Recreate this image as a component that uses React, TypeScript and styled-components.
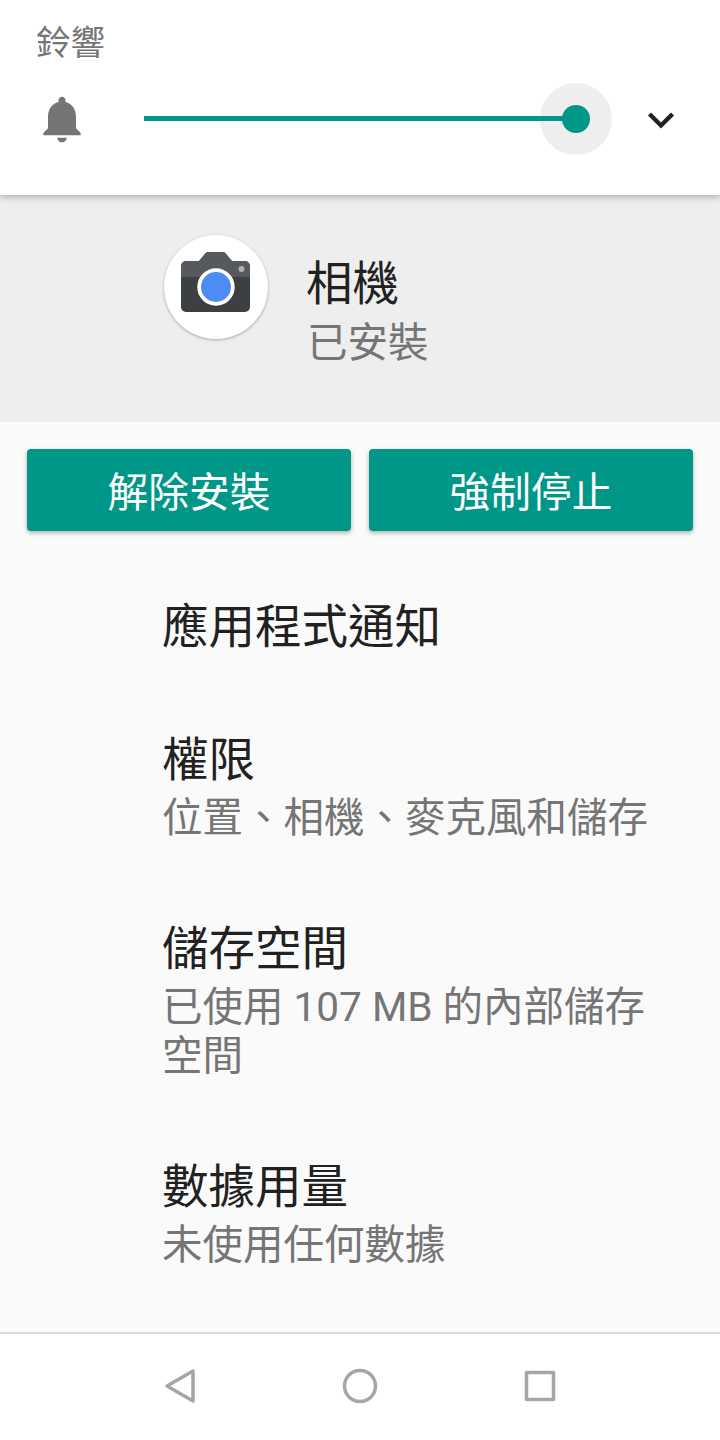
import styled, { createGlobalStyle } from 'styled-components';

const GlobalStyle = createGlobalStyle`
  html, body {
    margin: 0;
    padding: 0;
    background: #fafafa;
    font-family: Roboto, 'Noto Sans CJK TC', sans-serif;
  }
`;

const Screen = styled.div`
  width: 720px;
  height: 1440px;
  display: flex;
  flex-direction: column;
  overflow: hidden;
  background: #fafafa;
`;

// --- Volume panel ---
const VolumePanel = styled.div`
  position: relative;
  z-index: 1;
  height: 195px;
  box-sizing: border-box;
  padding: 18px 0 0 37px;
  background: #fff;
  box-shadow: 0 1px 8px rgba(0, 0, 0, 0.35);
`;

const VolumeLabel = styled.div`
  font-size: 34.5px;
  line-height: 48px;
  color: #757575;
  position: relative;
  top: 1px;
  left: -1px;
`;

const VolumeRow = styled.div`
  display: flex;
  align-items: center;
  height: 72px;
  margin-top: 17px;
`;

const BellIcon = styled.svg`
  width: 56px;
  height: 56px;
  margin-left: -3px;
`;

const Slider = styled.div`
  position: relative;
  width: 432px;
  height: 5px;
  margin-left: 54px;
  margin-top: -1px;
`;

const Halo = styled.div`
  position: absolute;
  right: -36px;
  top: -33px;
  width: 72px;
  height: 72px;
  border-radius: 50%;
  background: #eeeeee;
`;

const Fill = styled.div`
  position: relative;
  height: 100%;
  background: #009688;
`;

const Thumb = styled.div`
  position: absolute;
  right: -14px;
  top: -11px;
  width: 28px;
  height: 28px;
  border-radius: 50%;
  background: #009688;
`;

const ChevronIcon = styled.svg`
  width: 32px;
  height: 32px;
  margin-left: 69px;
  margin-top: 4px;
`;

// --- App header ---
const AppHeader = styled.div`
  height: 227px;
  display: flex;
  align-items: flex-start;
  box-sizing: border-box;
  padding: 40px 0 0 164px;
  background: #eeeeee;
`;

const AppIcon = styled.div`
  width: 104px;
  height: 104px;
  box-sizing: border-box;
  padding: 0 1px 10px 0;
  border-radius: 50%;
  background: #fff;
  box-shadow: 0 1px 3px rgba(0, 0, 0, 0.3);
  display: flex;
  align-items: center;
  justify-content: center;
`;

const AppInfo = styled.div`
  margin-left: 38px;
  margin-top: 20px;
`;

const AppName = styled.div`
  font-size: 46.5px;
  line-height: 58px;
  color: #212121;
`;

const AppStatus = styled.div`
  font-size: 40.5px;
  line-height: 54px;
  color: #757575;
  margin: 3px 0 0 1px;
`;

// --- Buttons ---
const ButtonRow = styled.div`
  display: flex;
  gap: 18px;
  padding: 27px 27px 0;
`;

const ActionButton = styled.button`
  flex: 1;
  height: 82px;
  padding: 0 0 2px;
  border: none;
  border-radius: 4px;
  background: #009688;
  color: #fff;
  font-family: inherit;
  font-size: 40.7px;
  box-shadow: 0 2px 4px rgba(0, 0, 0, 0.3);
`;

// --- Settings list ---
const List = styled.div`
  flex: 1;
  padding: 67px 60px 0 162px;
`;

const Item = styled.div<{ $gap: number }>`
  margin-bottom: ${(p) => p.$gap}px;
`;

const ItemTitle = styled.div`
  font-size: 46.5px;
  line-height: 58px;
  color: #212121;
`;

const ItemText = styled.div`
  font-size: 40.5px;
  line-height: 49px;
  color: #757575;
  margin-top: 5px;
`;

// --- Nav bar ---
const NavBar = styled.div`
  height: 108px;
  display: flex;
  align-items: center;
  justify-content: center;
  gap: 132px;
  box-sizing: border-box;
  padding-bottom: 2px;
  border-top: 2px solid #dcdcdc;
  background: #fff;
`;

const NavIcon = styled.svg`
  width: 48px;
  height: 48px;
  fill: none;
  stroke: #a6a6a6;
  stroke-width: 3.5;
  stroke-linejoin: round;
`;

const items = [
  { title: '應用程式通知', gap: 75 },
  { title: '權限', text: '位置、相機、麥克風和儲存', gap: 77 },
  { title: '儲存空間', text: '已使用 107 MB 的內部儲存空間', gap: 77 },
  { title: '數據用量', text: '未使用任何數據', gap: 0 },
];

export default function App() {
  return (
    <Screen>
      <GlobalStyle />
      <VolumePanel>
        <VolumeLabel>鈴響</VolumeLabel>
        <VolumeRow>
          <BellIcon viewBox="0 0 24 24" fill="#757575">
            <path d="M12 22c1.1 0 2-.9 2-2h-4c0 1.1.9 2 2 2zm6-6v-5c0-3.07-1.63-5.64-4.5-6.32V4c0-.83-.67-1.5-1.5-1.5s-1.5.67-1.5 1.5v.68C7.64 5.36 6 7.92 6 11v5l-2 2v1h16v-1l-2-2z" />
          </BellIcon>
          <Slider>
            <Halo />
            <Fill />
            <Thumb />
          </Slider>
          <ChevronIcon viewBox="0 0 32 32" fill="none" stroke="#212121" strokeWidth="4.4">
            <path d="M4.5 9L16 20.5 27.5 9" />
          </ChevronIcon>
        </VolumeRow>
      </VolumePanel>

      <AppHeader>
        <AppIcon>
          <svg width="69" height="60" viewBox="0 0 69 60">
            <path d="M5 9h13l6.5-7.8A3.5 3.5 0 0 1 27 0h15a3.5 3.5 0 0 1 2.5 1.2L51 9h13a5 5 0 0 1 5 5v41a5 5 0 0 1-5 5H5a5 5 0 0 1-5-5V14a5 5 0 0 1 5-5z" fill="#3c4043" />
            <path d="M5 9h13l6.5-7.8A3.5 3.5 0 0 1 27 0h15a3.5 3.5 0 0 1 2.5 1.2L51 9h13a5 5 0 0 1 5 5v11H0V14a5 5 0 0 1 5-5z" fill="#5f6368" opacity="0.75" />
            <circle cx="35" cy="35" r="18.7" fill="#fff" />
            <circle cx="35" cy="35" r="15" fill="#4e8cf4" />
            <circle cx="60.5" cy="17" r="3" fill="#aeb1b5" />
          </svg>
        </AppIcon>
        <AppInfo>
          <AppName>相機</AppName>
          <AppStatus>已安裝</AppStatus>
        </AppInfo>
      </AppHeader>

      <ButtonRow>
        <ActionButton>解除安裝</ActionButton>
        <ActionButton>強制停止</ActionButton>
      </ButtonRow>

      <List>
        {items.map((item) => (
          <Item key={item.title} $gap={item.gap}>
            <ItemTitle>{item.title}</ItemTitle>
            {item.text && <ItemText>{item.text}</ItemText>}
          </Item>
        ))}
      </List>

      <NavBar>
        <NavIcon viewBox="0 0 48 48">
          <path d="M37 9v30L11 24z" />
        </NavIcon>
        <NavIcon viewBox="0 0 48 48">
          <circle cx="24" cy="24" r="15.5" />
        </NavIcon>
        <NavIcon viewBox="0 0 48 48">
          <rect x="10.5" y="10.5" width="27" height="27" />
        </NavIcon>
      </NavBar>
    </Screen>
  );
}
